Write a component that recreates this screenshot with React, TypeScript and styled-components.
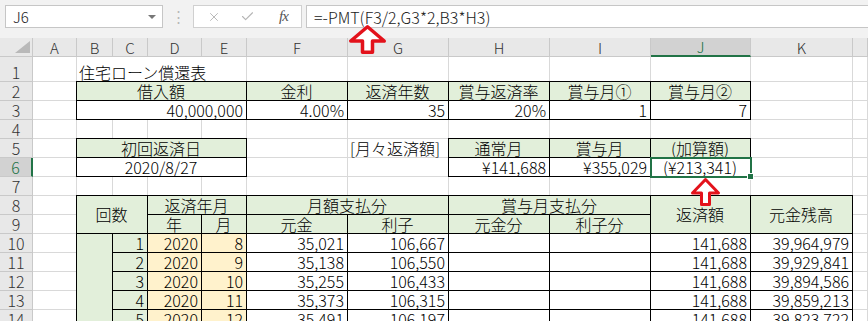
import React from "react";
import styled, { createGlobalStyle, css } from "styled-components";
import { Check, X } from "lucide-react";

const FONT = `"Noto Sans CJK JP", "Noto Sans", sans-serif`;
const GRID = "#d9d9d9";
const LINE = "#000";
const GREEN = "#e2efda";
const PEACH = "#fff2cc";
const SELECT = "#217346";
const HEAD_BG = "#e8e8e8";
const HEAD_LINE = "#c9c9c9";

type Align = "left" | "center" | "right";

const GlobalStyle = createGlobalStyle`
  html, body {
    margin: 0;
    padding: 0;
    background: #fff;
    overflow: hidden;
  }
  body {
    font-family: ${FONT};
    font-weight: 300;
    color: #000;
  }
`;

const Page = styled.div`
  position: relative;
  width: 868px;
  height: 321px;
  overflow: hidden;
  background: #fff;
`;

const FormulaBar = styled.div`
  height: 38px;
  box-sizing: border-box;
  padding: 5px 0 0 5px;
  display: flex;
  align-items: flex-start;
  background: #f2f2f2;
`;

const NameBox = styled.div`
  width: 158px;
  height: 23px;
  box-sizing: border-box;
  border: 1px solid #c6c6c6;
  background: #fff;
  display: flex;
  align-items: center;
  justify-content: space-between;
  padding: 0 6px 0 7px;
  font-size: 15px;
  color: #222;
`;

const Caret = styled.span`
  width: 0;
  height: 0;
  border-left: 4px solid transparent;
  border-right: 4px solid transparent;
  border-top: 4px solid #777;
`;

const Dots = styled.div`
  width: 30px;
  height: 23px;
  display: flex;
  align-items: center;
  justify-content: center;
  color: #b8b8b8;
  font-size: 15px;
  font-family: "DejaVu Sans", sans-serif;
`;

const FuncBox = styled.div`
  width: 109px;
  height: 23px;
  box-sizing: border-box;
  border: 1px solid #d0d0d0;
  background: #fff;
  display: flex;
  align-items: center;
  gap: 19px;
  padding-left: 13px;
  color: #b5b5b5;
`;

const Fx = styled.span`
  margin-left: 5px;
  font-family: "Liberation Serif", serif;
  font-style: italic;
  font-size: 15px;
  color: #555;
  letter-spacing: -1px;
`;

const FormulaInput = styled.div`
  flex: 1;
  height: 23px;
  margin-left: 4px;
  box-sizing: border-box;
  border: 1px solid #c6c6c6;
  border-right: none;
  background: #fff;
  display: flex;
  align-items: center;
  padding-left: 7px;
  font-size: 16px;
  color: #222;
`;

const Sheet = styled.div`
  display: grid;
  grid-template-columns: 33px 44px 36px 35px 54px 45px 101px 101px 101px 101px 100px 102px 1fr;
  grid-template-rows: 19px 25px repeat(13, 19px);
`;

const Corner = styled.div`
  grid-column: 1;
  grid-row: 1;
  background: ${HEAD_BG};
  border-right: 1px solid ${HEAD_LINE};
  border-bottom: 1px solid ${HEAD_LINE};
  display: flex;
  align-items: flex-end;
  justify-content: flex-end;
  padding: 0 2px 3px 0;
  box-sizing: border-box;
`;

const ColHead = styled.div<{ $col: number; $active?: boolean }>`
  grid-column: ${(p) => p.$col};
  grid-row: 1;
  box-sizing: border-box;
  background: ${(p) => (p.$active ? "#d2d2d2" : HEAD_BG)};
  border-right: 1px solid ${HEAD_LINE};
  border-bottom: ${(p) => (p.$active ? `2px solid ${SELECT}` : `1px solid ${HEAD_LINE}`)};
  color: ${(p) => (p.$active ? SELECT : "#333")};
  display: flex;
  align-items: center;
  justify-content: center;
  font-size: 15px;
  line-height: 17px;
`;

const RowHead = styled.div<{ $row: number; $active?: boolean }>`
  grid-column: 1;
  grid-row: ${(p) => p.$row};
  box-sizing: border-box;
  background: ${(p) => (p.$active ? "#d2d2d2" : HEAD_BG)};
  border-right: ${(p) => (p.$active ? `2px solid ${SELECT}` : `1px solid ${HEAD_LINE}`)};
  border-bottom: 1px solid ${HEAD_LINE};
  color: ${(p) => (p.$active ? SELECT : "#333")};
  display: flex;
  align-items: flex-end;
  justify-content: center;
  font-size: 16px;
  line-height: 17px;
`;

type CellProps = {
  $col: number;
  $row: number;
  $colSpan?: number;
  $rowSpan?: number;
  $fill?: string;
  $align?: Align;
  $mid?: boolean;
  $boxed?: boolean;
  $selected?: boolean;
};

const justify = { left: "flex-start", center: "center", right: "flex-end" };

const Cell = styled.div<CellProps>`
  grid-column: ${(p) => p.$col} / span ${(p) => p.$colSpan ?? 1};
  grid-row: ${(p) => p.$row} / span ${(p) => p.$rowSpan ?? 1};
  min-width: 0;
  box-sizing: border-box;
  display: flex;
  align-items: ${(p) => (p.$mid ? "center" : "flex-end")};
  justify-content: ${(p) => justify[p.$align ?? "left"]};
  padding: 0 3px 0 2px;
  background: ${(p) => p.$fill ?? "#fff"};
  border-right: 1px solid ${GRID};
  border-bottom: 1px solid ${GRID};
  font-size: 16px;
  line-height: 17px;
  white-space: nowrap;

  ${(p) =>
    p.$boxed &&
    css`
      margin: -1px 0 0 -1px;
      border: 1px solid ${LINE};
    `}

  ${(p) =>
    p.$selected &&
    css`
      position: relative;
      &::after {
        content: "";
        position: absolute;
        top: -1px;
        left: -1px;
        right: -2px;
        bottom: -2px;
        border: 2px solid ${SELECT};
      }
      &::before {
        content: "";
        position: absolute;
        right: -4px;
        bottom: -4px;
        width: 5px;
        height: 5px;
        background: ${SELECT};
        border: 1px solid #fff;
        z-index: 1;
      }
    `}
`;

const Arrow = styled.svg<{ $left: number; $top: number }>`
  position: absolute;
  left: ${(p) => p.$left}px;
  top: ${(p) => p.$top}px;
  overflow: visible;
`;

type Spec = {
  r: number;
  c: string;
  cs?: number;
  rs?: number;
  text?: string;
  fill?: string;
  align?: Align;
  mid?: boolean;
  boxed?: boolean;
  selected?: boolean;
};

const LETTERS = "ABCDEFGHIJKL";
const colOf = (c: string) => LETTERS.indexOf(c) + 2;

const head = (r: number, c: string, text: string, cs = 1, rs = 1): Spec => ({
  r, c, cs, rs, text, fill: GREEN, align: "center", boxed: true, mid: rs > 1,
});
const num = (r: number, c: string, text: string, fill?: string): Spec => ({
  r, c, text, fill, align: "right", boxed: true,
});

const schedule = [
  ["1", "2020", "8", "35,021", "106,667", "141,688", "39,964,979"],
  ["2", "2020", "9", "35,138", "106,550", "141,688", "39,929,841"],
  ["3", "2020", "10", "35,255", "106,433", "141,688", "39,894,586"],
  ["4", "2020", "11", "35,373", "106,315", "141,688", "39,859,213"],
  ["5", "2020", "12", "35,491", "106,197", "141,688", "39,823,722"],
];

const specs: Spec[] = [
  { r: 1, c: "B", cs: 4, text: "住宅ローン償還表" },
  head(2, "B", "借入額", 4),
  head(2, "F", "金利"),
  head(2, "G", "返済年数"),
  head(2, "H", "賞与返済率"),
  head(2, "I", "賞与月①"),
  head(2, "J", "賞与月②"),
  { r: 3, c: "B", cs: 4, text: "40,000,000", align: "right", boxed: true },
  num(3, "F", "4.00%"),
  num(3, "G", "35"),
  num(3, "H", "20%"),
  num(3, "I", "1"),
  num(3, "J", "7"),
  head(5, "B", "初回返済日", 4),
  { r: 5, c: "G", text: "[月々返済額]" },
  head(5, "H", "通常月"),
  head(5, "I", "賞与月"),
  head(5, "J", "(加算額)"),
  { r: 6, c: "B", cs: 4, text: "2020/8/27", align: "center", boxed: true },
  num(6, "H", "¥141,688"),
  num(6, "I", "¥355,029"),
  { r: 6, c: "J", text: "(¥213,341)", align: "center", boxed: true, selected: true },
  head(8, "B", "回数", 2, 2),
  head(8, "D", "返済年月", 2),
  head(8, "F", "月額支払分", 2),
  head(8, "H", "賞与月支払分", 2),
  head(8, "J", "返済額", 1, 2),
  head(8, "K", "元金残高", 1, 2),
  head(9, "D", "年"),
  head(9, "E", "月"),
  head(9, "F", "元金"),
  head(9, "G", "利子"),
  head(9, "H", "元金分"),
  head(9, "I", "利子分"),
  { r: 10, c: "B", rs: 5, fill: GREEN, boxed: true },
  ...schedule.flatMap(([n, y, m, p, i, pay, bal], k) => {
    const r = 10 + k;
    return [
      num(r, "C", n, GREEN),
      num(r, "D", y, PEACH),
      num(r, "E", m, PEACH),
      num(r, "F", p),
      num(r, "G", i),
      num(r, "H", ""),
      num(r, "I", ""),
      num(r, "J", pay),
      num(r, "K", bal),
    ];
  }),
];

const ROWS = 14;

function blankCells(): Spec[] {
  const taken = new Set<string>();
  specs.forEach((s) => {
    const c0 = LETTERS.indexOf(s.c);
    for (let r = s.r; r < s.r + (s.rs ?? 1); r++)
      for (let c = c0; c < c0 + (s.cs ?? 1); c++) taken.add(`${r}:${c}`);
  });
  const out: Spec[] = [];
  for (let r = 1; r <= ROWS; r++)
    for (let c = 0; c < LETTERS.length; c++)
      if (!taken.has(`${r}:${c}`)) out.push({ r, c: LETTERS[c] });
  return out;
}

const renderCell = (s: Spec, key: string) => (
  <Cell
    key={key}
    $col={colOf(s.c)}
    $row={s.r + 1}
    $colSpan={s.cs}
    $rowSpan={s.rs}
    $fill={s.fill}
    $align={s.align}
    $mid={s.mid}
    $boxed={s.boxed}
    $selected={s.selected}
  >
    {s.text}
  </Cell>
);

function UpArrow({ left, top, w, h, head, stem, stroke }: {
  left: number; top: number; w: number; h: number; head: number; stem: number; stroke: number;
}) {
  const m = stroke / 2;
  const cx = w / 2;
  const d = `M${cx} ${m + 1} L${w - m} ${head} L${cx + stem / 2} ${head} L${cx + stem / 2} ${h - m} L${cx - stem / 2} ${h - m} L${cx - stem / 2} ${head} L${m} ${head} Z`;
  return (
    <Arrow $left={left} $top={top} width={w} height={h} viewBox={`0 0 ${w} ${h}`}>
      <path d={d} fill="#fff" stroke="#e3121b" strokeWidth={stroke} strokeLinejoin="round" />
    </Arrow>
  );
}

export default function App() {
  const blanks = blankCells();
  const plain = specs.filter((s) => !s.boxed);
  const boxed = specs.filter((s) => s.boxed);

  return (
    <Page>
      <GlobalStyle />
      <FormulaBar>
        <NameBox>
          J6
          <Caret />
        </NameBox>
        <Dots>⋮</Dots>
        <FuncBox>
          <X size={14} strokeWidth={1.6} />
          <Check size={15} strokeWidth={1.8} />
          <Fx>fx</Fx>
        </FuncBox>
        <FormulaInput>=-PMT(F3/2,G3*2,B3*H3)</FormulaInput>
      </FormulaBar>

      <Sheet>
        <Corner>
          <svg width="15" height="12" viewBox="0 0 15 12">
            <path d="M15 0 L15 12 L0 12 Z" fill="#b9b9b9" />
          </svg>
        </Corner>
        {LETTERS.split("").map((l, i) => (
          <ColHead key={l} $col={i + 2} $active={l === "J"}>
            {l === "L" ? "" : l}
          </ColHead>
        ))}
        {Array.from({ length: ROWS }, (_, i) => (
          <RowHead key={i} $row={i + 2} $active={i + 1 === 6}>
            {i + 1}
          </RowHead>
        ))}
        {blanks.map((s) => renderCell(s, `b${s.r}${s.c}`))}
        {plain.map((s) => renderCell(s, `p${s.r}${s.c}`))}
        {boxed.map((s) => renderCell(s, `x${s.r}${s.c}`))}
      </Sheet>

      <UpArrow left={349} top={24} w={37} h={30} head={17} stem={10} stroke={3.5} />
      <UpArrow left={691} top={177} w={29} h={29} head={16} stem={8} stroke={3} />
    </Page>
  );
}
